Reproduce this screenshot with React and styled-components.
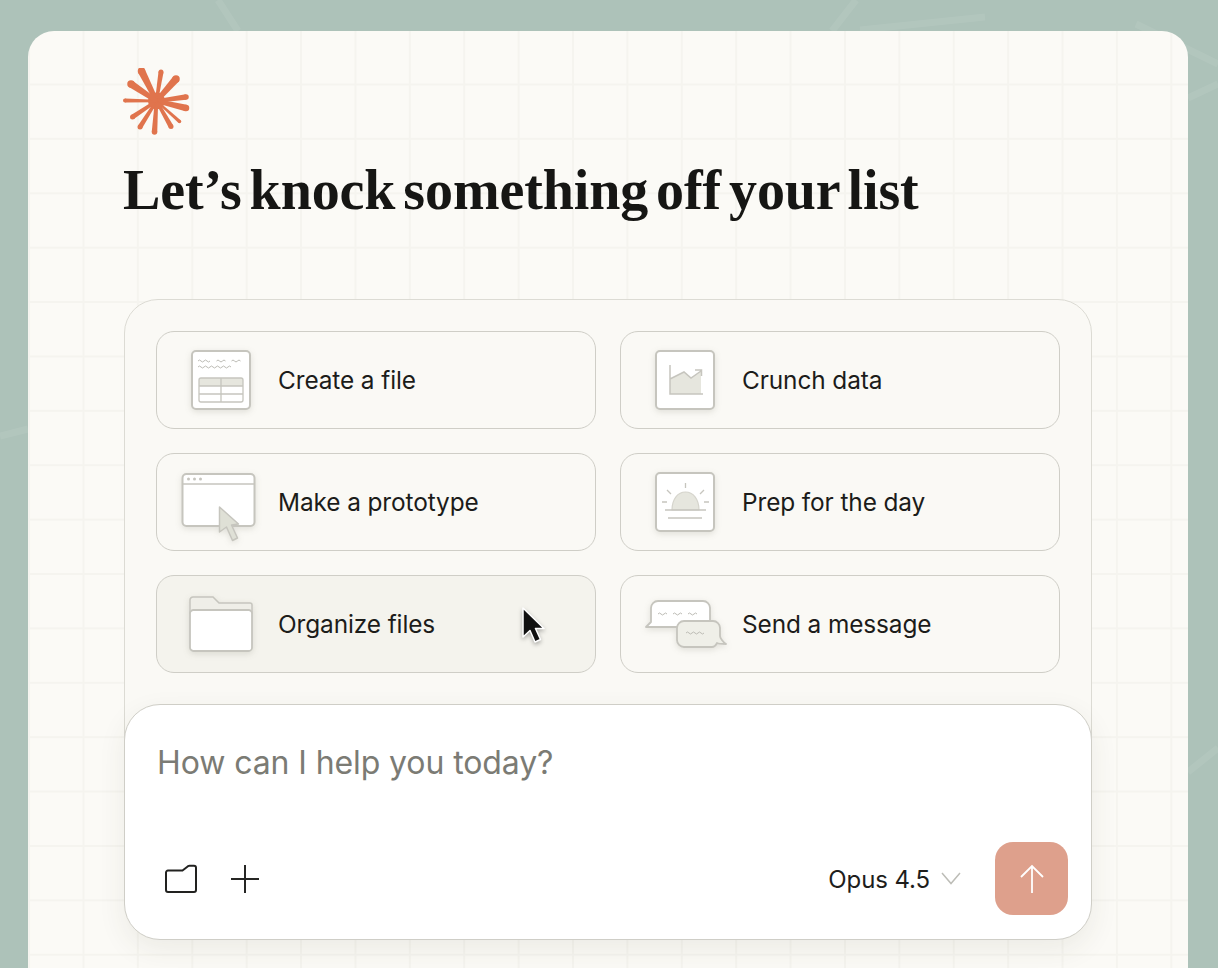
import React from "react";
import styled, { createGlobalStyle } from "styled-components";

const Global = createGlobalStyle`
  html, body {
    margin: 0;
    padding: 0;
    background: #adc2b9;
  }
  * {
    box-sizing: border-box;
  }
`;

const Page = styled.div`
  position: relative;
  width: 1218px;
  height: 968px;
  overflow: hidden;
  background: #adc2b9;
  padding: 31px 30px 0 28px;
  font-family: Inter, "Liberation Sans", sans-serif;
`;

const Streaks = styled.svg`
  position: absolute;
  left: 0;
  top: 0;
  width: 1218px;
  height: 968px;
`;

const Card = styled.main`
  position: relative;
  height: 1000px;
  border-radius: 26px 26px 0 0;
  padding: 37px 96px 0;
  background-color: #fbfaf6;
  background-image:
    linear-gradient(to right, #f5f4ef 1.5px, transparent 1.5px),
    linear-gradient(to bottom, #f5f4ef 1.5px, transparent 1.5px);
  background-size: 54.4px 54.4px;
  background-position: 54.5px 52.5px;
`;

const Logo = styled.svg`
  display: block;
  width: 68px;
  height: 68px;
  margin-left: -1px;
`;

const Heading = styled.h1`
  margin: 21px 0 0 -1px;
  font-family: "Liberation Serif", serif;
  font-weight: 700;
  font-size: 56px;
  line-height: 66px;
  letter-spacing: -0.1px;
  word-spacing: -6px;
  color: #161614;
  white-space: nowrap;
`;

const Panel = styled.section`
  margin-top: 76px;
  padding: 31px 31px 100px;
  border: 1px solid #dcdbd4;
  border-radius: 34px;
  background: #faf9f5;
`;

const Options = styled.div`
  display: grid;
  grid-template-columns: 439.5px 439.5px;
  column-gap: 24.5px;
  row-gap: 24px;
`;

const Option = styled.button`
  display: flex;
  align-items: center;
  height: 98px;
  padding: 0 0 0 24px;
  gap: 17px;
  border: 1.5px solid #cfcec7;
  border-radius: 18px;
  background: ${(p) => (p.$active ? "#f4f3ed" : "#faf9f5")};
  font-family: inherit;
  font-size: 24.4px;
  letter-spacing: -0.1px;
  color: #1c1c1a;
  text-align: left;
`;

const IconSlot = styled.span`
  display: flex;
  align-items: center;
  justify-content: center;
  width: 80px;
  height: 80px;
  flex: none;
`;

const IconSvg = styled.svg`
  display: block;
  flex: none;
  overflow: visible;
  filter: drop-shadow(0 2px 3px rgba(70, 70, 50, 0.14));
`;

const Composer = styled.section`
  position: relative;
  display: flex;
  flex-direction: column;
  justify-content: space-between;
  height: 236px;
  margin-top: -70px;
  padding: 38px 23px 24px 32px;
  border: 1px solid #cfcec7;
  border-radius: 36px;
  background: #fff;
  box-shadow: 0 10px 28px rgba(60, 60, 40, 0.08);
`;

const Placeholder = styled.div`
  font-size: 32px;
  line-height: 40px;
  letter-spacing: -0.1px;
  color: #7b7b74;
`;

const Toolbar = styled.div`
  display: flex;
  align-items: center;
  justify-content: space-between;
`;

const ToolGroup = styled.div`
  display: flex;
  align-items: center;
  gap: ${(p) => p.$gap || 0}px;
  padding-left: ${(p) => p.$inset || 0}px;
`;

const ModelLabel = styled.span`
  padding-top: 2px;
  font-size: 24px;
  letter-spacing: -0.1px;
  color: #1e1e1c;
  margin-right: 11px;
`;

const SendButton = styled.button`
  display: flex;
  align-items: center;
  justify-content: center;
  width: 73px;
  height: 73px;
  margin-left: 34px;
  padding: 0;
  border: none;
  border-radius: 18px;
  background: #dea08c;
`;

const Pointer = styled.svg`
  position: absolute;
  left: 518px;
  top: 604px;
  width: 30px;
  height: 42px;
  filter: drop-shadow(0 2px 2px rgba(0, 0, 0, 0.3));
`;

const line = "#c6c5be";
const tint = "#e6e6de";

const spokes = [
  [141.5, 70, 7.5],
  [161, 71, 5],
  [176, 78, 7.5],
  [186, 96, 5.5],
  [186, 107, 6.5],
  [179.5, 120.5, 3.5],
  [171, 125.5, 5],
  [154.5, 131, 5.5],
  [140, 126, 5],
  [132.5, 116, 5],
  [125, 99.5, 4],
  [131, 83, 7.5],
];

function LogoMark() {
  const cx = 156.5;
  const cy = 100;
  return (
    <Logo viewBox="123 67 68 68">
      <circle cx={cx} cy={cy} r="8.5" fill="#e0744d" />
      {spokes.map(([x, y, w]) => {
        const dx = x - cx;
        const dy = y - cy;
        const len = Math.hypot(dx, dy);
        const nx = (-dy / len) * (w / 2);
        const ny = (dx / len) * (w / 2);
        const d = `M${cx + nx * 0.6} ${cy + ny * 0.6} L${x + nx} ${y + ny} L${x - nx} ${y - ny} L${cx - nx * 0.6} ${cy - ny * 0.6}Z`;
        return (
          <g key={`${x}-${y}`} fill="#e0744d">
            <path d={d} />
            <circle cx={x} cy={y} r={w / 2} />
          </g>
        );
      })}
    </Logo>
  );
}

const Squiggle = ({ d }) => <path d={d} fill="none" stroke="#bdbcb5" strokeWidth="1" />;

function FileIcon() {
  return (
    <IconSvg width="60" height="60" viewBox="0 0 60 60">
      <rect x="1" y="1" width="58" height="58" rx="4" fill="#fff" stroke={line} strokeWidth="2" />
      <Squiggle d="M7 11q1.500-2 3 0t3 0 3 0 3 0M25.500 11q1.500-2 3 0t3 0 3 0M40.500 11q1.500-2 3 0t3 0 3 0" />
      <Squiggle d="M7 17q1.500-2 3 0t3 0 3 0 3 0 3 0 3 0 3 0 3 0 3 0 3 0 3 0" />
      <rect x="8" y="28" width="44" height="8" fill={tint} />
      <rect x="8" y="28" width="44" height="24" rx="2" fill="none" stroke={line} strokeWidth="1.300" />
      <path d="M8 36h44M8 44h44M30 28v24" fill="none" stroke={line} strokeWidth="1.300" />
    </IconSvg>
  );
}

function ChartIcon() {
  return (
    <IconSvg width="60" height="60" viewBox="0 0 60 60">
      <rect x="1" y="1" width="58" height="58" rx="4" fill="#fff" stroke={line} strokeWidth="2" />
      <path d="M15 29l14-7 7 6 10-7v23H15z" fill={tint} />
      <path d="M15 15v29h33M15 29l14-7 7 6 10-7M40 20h6.500v6" fill="none" stroke={line} strokeWidth="1.500" />
    </IconSvg>
  );
}

function PrototypeIcon() {
  return (
    <IconSvg width="76" height="84" viewBox="0 0 76 84">
      <g transform="translate(-2.500 12)">
        <rect x="2" y="2" width="72" height="52" rx="4" fill="#fff" stroke={line} strokeWidth="2" />
        <path d="M2 12h72" stroke={line} strokeWidth="1.500" />
        <circle cx="8" cy="7" r="1.500" fill={line} />
        <circle cx="14" cy="7" r="1.500" fill={line} />
        <circle cx="20" cy="7" r="1.500" fill={line} />
        <path
          d="M39 35L58 52L51 53L57 66L52 68.500L46 55L39 60Z"
          fill="#dfe0d6"
          stroke={line}
          strokeWidth="1.500"
          strokeLinejoin="round"
        />
      </g>
    </IconSvg>
  );
}

function SunIcon() {
  return (
    <IconSvg width="60" height="60" viewBox="0 0 60 60">
      <rect x="1" y="1" width="58" height="58" rx="4" fill="#fff" stroke={line} strokeWidth="2" />
      <path d="M17 38C17 27 23 20 30.500 20S44 27 44 38z" fill={tint} stroke="#d5d4cc" strokeWidth="1.200" />
      <path
        d="M10 38h41M13 46h34M30.500 11v5M12 18l4 4M49 18l-4 4M7 30h5M49 30h5"
        fill="none"
        stroke={line}
        strokeWidth="1.300"
      />
    </IconSvg>
  );
}

function FolderIcon() {
  return (
    <IconSvg width="64" height="56" viewBox="0 0 64 56">
      <path
        d="M1 14V4a3 3 0 0 1 3-3h20l6 6h31a2 2 0 0 1 2 2v8H1z"
        fill="#efeee8"
        stroke={line}
        strokeWidth="1.500"
      />
      <rect x="1" y="14" width="62" height="41" rx="3.500" fill="#fff" stroke={line} strokeWidth="1.800" />
    </IconSvg>
  );
}

function MessageIcon() {
  return (
    <IconSvg width="80" height="48" viewBox="0 0 80 48">
      <path
        d="M13 1h45a7 7 0 0 1 7 7v12a7 7 0 0 1-7 7H1l5-5V8a7 7 0 0 1 7-7z"
        fill="#fff"
        stroke={line}
        strokeWidth="1.800"
        strokeLinejoin="round"
      />
      <path
        d="M39 21h29a7 7 0 0 1 7 7v8c0 2 3 6 6 8-3 0-7 0-9-1-1 2-3 4-5 4H39a7 7 0 0 1-7-7V28a7 7 0 0 1 7-7z"
        fill="#efefe8"
        stroke={line}
        strokeWidth="1.800"
        strokeLinejoin="round"
      />
      <Squiggle d="M13 14q1.500-2 3 0t3 0 3 0M28 14q1.500-2 3 0t3 0 3 0M43 14q1.500-2 3 0t3 0 3 0" />
      <Squiggle d="M41 33q1.500-2 3 0t3 0 3 0 3 0 3 0 3 0" />
    </IconSvg>
  );
}

const options = [
  { label: "Create a file", Icon: FileIcon },
  { label: "Crunch data", Icon: ChartIcon },
  { label: "Make a prototype", Icon: PrototypeIcon },
  { label: "Prep for the day", Icon: SunIcon },
  { label: "Organize files", Icon: FolderIcon, active: true },
  { label: "Send a message", Icon: MessageIcon },
];

export default function App() {
  return (
    <Page>
      <Global />
      <Streaks viewBox="0 0 1218 968" fill="none" stroke="#fff" strokeOpacity="0.07" strokeWidth="7">
        <path d="M218 0l20 31M856 0l-24 31M860 30l125-13M1136 24l82 40M1188 98l30-14M0 436l28-7M1188 772l30-24" />
      </Streaks>
      <Card>
        <LogoMark />
        <Heading>Let’s knock something off your list</Heading>
        <Panel>
          <Options>
            {options.map(({ label, Icon, active }) => (
              <Option key={label} $active={active}>
                <IconSlot>
                  <Icon />
                </IconSlot>
                {label}
              </Option>
            ))}
          </Options>
        </Panel>
        <Composer>
          <Placeholder>How can I help you today?</Placeholder>
          <Toolbar>
            <ToolGroup $gap={32} $inset={7}>
              <svg width="34" height="30" viewBox="0 0 34 30" fill="none" stroke="#222220" strokeWidth="2" strokeLinejoin="round">
                <path d="M2 8.500a2 2 0 0 1 2-2h14.500L24 2.200c.5-.3 1-.4 1.500-.4H30a2 2 0 0 1 2 2V26a2 2 0 0 1-2 2H4a2 2 0 0 1-2-2z" />
              </svg>
              <svg width="30" height="30" viewBox="0 0 30 30" fill="none" stroke="#262624" strokeWidth="2">
                <path d="M15 1v28M1 15h28" />
              </svg>
            </ToolGroup>
            <ToolGroup>
              <ModelLabel>Opus 4.5</ModelLabel>
              <svg width="20" height="13" viewBox="0 0 20 13" fill="none" stroke="#bdbdb7" strokeWidth="1.500">
                <path d="M1 1l9 10.500L19 1" />
              </svg>
              <SendButton aria-label="Send">
                <svg width="24" height="30" viewBox="0 0 24 30" fill="none" stroke="#fff" strokeWidth="1.800">
                  <path d="M12 29V2M1 13L12 2l11 11" />
                </svg>
              </SendButton>
            </ToolGroup>
          </Toolbar>
        </Composer>
      </Card>
      <Pointer viewBox="0 0 30 42">
        <path
          d="M5 4v29l7-6.500 5 11.500 5.500-2.500L17.500 24.500H26z"
          fill="#111"
          stroke="#fff"
          strokeWidth="1.500"
          strokeLinejoin="round"
        />
      </Pointer>
    </Page>
  );
}
